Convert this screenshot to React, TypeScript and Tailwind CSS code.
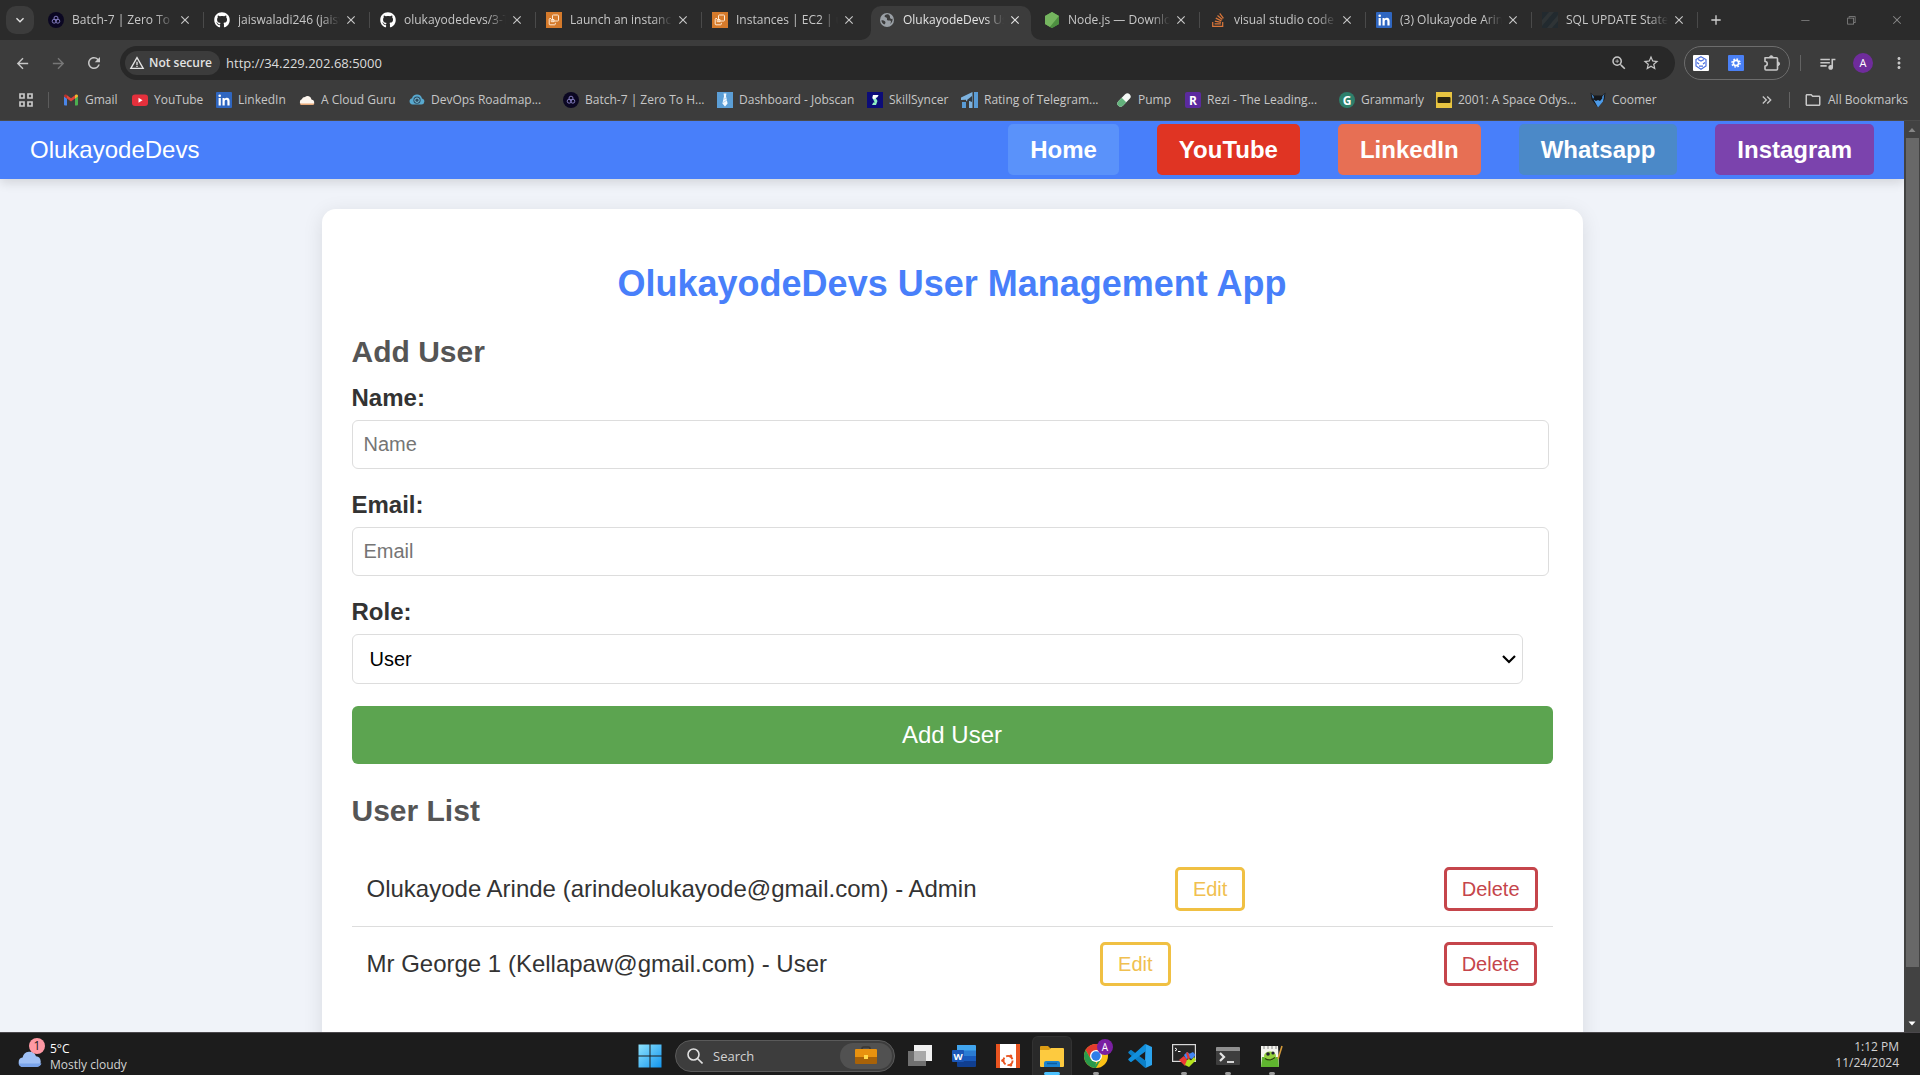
import type { ReactNode } from "react";
import {
  MdArrowBack,
  MdArrowForward,
  MdClose,
  MdKeyboardArrowDown,
  MdAdd,
  MdMoreVert,
  MdOutlineFolder,
  MdQueueMusic,
  MdRefresh,
  MdStarOutline,
  MdWarningAmber,
  MdZoomIn,
  MdKeyboardDoubleArrowRight,
} from "react-icons/md";
import { FaGithub, FaStackOverflow } from "react-icons/fa";
import { VscChromeClose, VscChromeMinimize, VscChromeRestore } from "react-icons/vsc";

/* ---------- Site icons ---------- */

const Batch = () => (
  <svg viewBox="0 0 16 16" className="size-4 shrink-0">
    <circle cx="8" cy="8" r="8" fill="#0b0722" />
    <g fill="none" stroke="#8c86c9" strokeWidth="0.9">
      <circle cx="8" cy="6.2" r="2" />
      <circle cx="6.2" cy="9.2" r="2" />
      <circle cx="9.8" cy="9.2" r="2" />
    </g>
  </svg>
);

const Github = () => <FaGithub className="size-4 shrink-0 text-white" />;

const Ec2 = () => (
  <svg viewBox="0 0 16 16" className="size-4 shrink-0">
    <rect width="16" height="16" fill="#d57a2b" />
    <g fill="none" stroke="#ffe9d2" strokeWidth="1">
      <rect x="6.5" y="3" width="6" height="6" rx="0.8" />
      <path d="M5 6.5H4a.8.8 0 0 0-.8.8V12a.8.8 0 0 0 .8.8h4.500a.8.8 0 0 0 .8-.8v-1.200" />
      <path d="M8 7.500v2.200H5.200V7.500Z" />
    </g>
  </svg>
);

const Globe = () => (
  <svg viewBox="0 0 16 16" className="size-4 shrink-0">
    <circle cx="8" cy="8" r="7" fill="#9aa0a6" />
    <path d="M9 2.200C7 2 5.200 3.200 5.600 4.600c.3 1 1.600.6 2.200 1.400.5.8-.3 1.600.6 2.200 1 .6 2.600-.2 3.400.8.5.8-.2 2-.9 3 2.200-1.200 3-3.300 2.600-5.200C11.800 7.200 10.800 6.300 11 5c.1-.9-.6-2.400-2-2.800ZM2.400 8.200c1.600.1 3.200.4 3.900 1.500.6 1.100-.2 2.200-1 2.900C3.600 11.700 2.500 10.200 2.400 8.200Z" fill="#3c3c3c" />
  </svg>
);

const Node = () => (
  <svg viewBox="0 0 16 16" className="size-4 shrink-0">
    <path d="M8 0l7 4v8l-7 4-7-4V4z" fill="#5fa04e" />
    <path d="M8 0l7 4-9 11-5-3V4z" fill="#75b55f" />
    <path d="M15 4v8l-7 4-2-1z" fill="#4e8f41" />
  </svg>
);

const Stack = () => <FaStackOverflow className="size-4 shrink-0 text-[#d9763a]" />;

const LinkedIn = () => (
  <svg viewBox="0 0 16 16" className="size-4 shrink-0">
    <rect width="16" height="16" rx="1" fill="#2f66c0" />
    <g fill="#fff">
      <circle cx="3.700" cy="3.700" r="1.300" />
      <path d="M2.600 6h2.200v7.500H2.600zM6.500 6h2.100v1c.5-.8 1.300-1.200 2.300-1.200 2 0 2.700 1.300 2.700 3.300v4.400h-2.200V9.500c0-1.100-.3-1.800-1.200-1.800-1 0-1.500.7-1.500 1.900v3.900H6.500z" />
    </g>
  </svg>
);

const Stripes = () => (
  <svg viewBox="0 0 16 16" className="size-4 shrink-0">
    <rect width="16" height="16" fill="#222a2f" />
    <path d="M0 8 7 0h5L0 14zM5 16 16 3v6l-6 7z" fill="#2f3436" />
  </svg>
);

const Gmail = () => (
  <svg viewBox="0 0 16 16" className="size-4 shrink-0">
    <path d="M1 4v8.500a1 1 0 0 0 1 1h2V6.500z" fill="#4a86e8" />
    <path d="M15 4v8.500a1 1 0 0 1-1 1h-2V6.500z" fill="#4caf50" />
    <path d="M4 6.600V3.200l4 3 4-3v3.400l-4 3z" fill="#e0453a" />
    <path d="M1 4c0-1.400 1.500-1.900 2.500-1.200l.5.400v3.500L1 4.600z" fill="#b8322a" />
    <path d="M15 4c0-1.400-1.500-1.900-2.500-1.200l-.5.400v3.500l3-2.100z" fill="#f2b92f" />
  </svg>
);

const YouTube = () => (
  <svg viewBox="0 0 16 16" className="size-4 shrink-0">
    <rect y="2.500" width="16" height="11.500" rx="3" fill="#e5303c" />
    <path d="M6.500 5.800v5l4-2.500z" fill="#fff" />
  </svg>
);

const Cloud = () => (
  <svg viewBox="0 0 16 16" className="size-4 shrink-0">
    <path d="M3 13a3 3 0 0 1-.2-5.700A3.400 3.400 0 0 1 6 5a4 4 0 0 1 6.500 2.500A2.800 2.800 0 0 1 13.200 13z" fill="#fdf6ee" />
    <path d="M.8 11.500c.4 1 1.200 1.500 2.200 1.500h10.200c1.200 0 2-.6 2.400-1.500z" fill="#e7a877" />
  </svg>
);

const DevOps = () => (
  <svg viewBox="0 0 16 16" className="size-4 shrink-0">
    <path d="M3.500 12.500A3.200 3.200 0 0 1 3 6.200 5.200 5.200 0 0 1 13 6.400a3.100 3.100 0 0 1-.5 6.100z" fill="#58a9cf" />
    <circle cx="8" cy="8.200" r="3.600" fill="#2b4a63" />
    <circle cx="8" cy="8.200" r="2.200" fill="none" stroke="#7fc6de" />
  </svg>
);

const Tie = () => (
  <svg viewBox="0 0 16 16" className="size-4 shrink-0">
    <rect width="16" height="16" fill="#5b9ed6" />
    <path d="M6.600 1.500h2.800L9 4.300l1.600 7.200L8 14.500l-2.600-3L7 4.300z" fill="#f3f9ff" />
    <path d="M6.600 7.500 9.300 5.800M6 10.500l4-2.300" stroke="#9cc5e8" strokeWidth=".7" />
  </svg>
);

const SkillSyncer = () => (
  <svg viewBox="0 0 16 16" className="size-4 shrink-0">
    <rect width="16" height="16" fill="#0c0c78" />
    <path d="M6 3h5.500L10 5.500H8.500L10.500 9 9 13H5l1.300-2.600h1.400L5.500 6z" fill="#8ff0c4" />
    <path d="M6 3h5.500L10 5.500H8.500L9 6.500 6 7 5.500 6z" fill="#fff" />
  </svg>
);

const Rating = () => (
  <svg viewBox="0 0 17 16" className="h-4 w-[17px] shrink-0">
    <path d="M0 5.500 11.500 0v16H8V7L5 9.500V7.800L0 8z" fill="#7db2de" />
    <path d="M1 10h4v6H1zM13 0h4v16h-4z" fill="#5a9cd6" />
    <path d="m6 8 5-4v6z" fill="#2f3b46" />
  </svg>
);

const Pill = () => (
  <svg viewBox="0 0 16 16" className="size-4 shrink-0">
    <g transform="rotate(45 8 8)">
      <rect x="4.800" y="0" width="6.400" height="16" rx="3.200" fill="#f4f8f5" />
      <path d="M4.800 8h6.400v4.800a3.200 3.200 0 0 1-6.400 0z" fill="#63b27c" />
    </g>
  </svg>
);

const Letter = ({ bg, children, round }: { bg: string; children: string; round?: boolean }) => (
  <svg viewBox="0 0 16 16" className="size-4 shrink-0">
    <rect width="16" height="16" rx={round ? 8 : 2} fill={bg} />
    <text x="8" y="12.500" textAnchor="middle" fontSize="12" fontWeight="700" fill="#fff" fontFamily="Open Sans, sans-serif">
      {children}
    </text>
  </svg>
);

const Imdb = () => (
  <svg viewBox="0 0 16 16" className="size-4 shrink-0">
    <rect width="16" height="16" fill="#e8c440" />
    <rect x="1.500" y="5" width="13" height="6" rx="1" fill="#2a2410" />
  </svg>
);

const Fox = () => (
  <svg viewBox="0 0 16 16" className="size-4 shrink-0">
    <path d="m.5.500 3 3h9l3-3-1 7L8 15.500 1.500 7.500z" fill="#15181d" />
    <path d="M3.500 7.500 6 9l2-1 2 1 4-4.500-1 5L8 15.500z" fill="#4d9be8" />
    <path d="M1.500 2 4 5l-1 2zM14.500 2 12 5l1 2z" fill="#4d9be8" />
    <path d="m5 5 3 1.500L11 5l-1 3-2-1-2 1z" fill="#15181d" />
  </svg>
);

/* ---------- Browser frame ---------- */

type Tab = { title: string; icon: ReactNode; active?: boolean; line?: boolean };

const tabs: Tab[] = [
  { title: "Batch-7 | Zero To H", icon: <Batch />, line: true },
  { title: "jaiswaladi246 (jaisw", icon: <Github />, line: true },
  { title: "olukayodedevs/3-T", icon: <Github />, line: true },
  { title: "Launch an instance", icon: <Ec2 />, line: true },
  { title: "Instances | EC2 | us", icon: <Ec2 /> },
  { title: "OlukayodeDevs Us", icon: <Globe />, active: true },
  { title: "Node.js — Downlo", icon: <Node />, line: true },
  { title: "visual studio code", icon: <Stack />, line: true },
  { title: "(3) Olukayode Arin", icon: <LinkedIn />, line: true },
  { title: "SQL UPDATE State", icon: <Stripes />, line: true },
];

function BrowserTab({ title, icon, active, line }: Tab) {
  return (
    <div className={`relative h-[34px] w-[166px] min-w-0 ${active ? "px-[3px]" : ""}`}>
      <div
        className={`relative flex h-full items-center gap-2 pb-[6px] ${
          active ? "rounded-t-[10px] bg-[#3c3c3c] pr-[9px] pl-2 text-[#e3e3e3]" : "pr-3 pl-[10px] text-[#c7c7c7]"
        }`}
      >
        {active && (
          <>
            <svg viewBox="0 0 10 10" className="absolute bottom-0 -left-[10px] size-[10px]">
              <path d="M10 0v10H0A10 10 0 0 0 10 0z" fill="#3c3c3c" />
            </svg>
            <svg viewBox="0 0 10 10" className="absolute -right-[10px] bottom-0 size-[10px]">
              <path d="M0 0v10h10A10 10 0 0 1 0 0z" fill="#3c3c3c" />
            </svg>
          </>
        )}
        {icon}
        <span className="-mr-1 min-w-0 flex-1 overflow-hidden [mask-image:linear-gradient(to_right,black_82%,transparent)] text-xs whitespace-nowrap">
          {title}
        </span>
        <button aria-label={`Close ${title}`} className="shrink-0">
          <MdClose className="size-[14px]" />
        </button>
      </div>
      {line && <span className="absolute top-[6px] right-0 h-4 w-px bg-[#4a4a4a]" />}
    </div>
  );
}

function TabStrip() {
  return (
    <div className="flex h-10 shrink-0 items-end bg-[#2b2b2b] pl-[6px]">
      <button aria-label="Search tabs" className="mr-1 mb-[6px] flex size-7 shrink-0 items-center justify-center rounded-[10px] bg-[#3c3c3c] text-[#e3e3e3]">
        <MdKeyboardArrowDown className="size-4" />
      </button>
      {tabs.map((t) => (
        <BrowserTab key={t.title} {...t} />
      ))}
      <button aria-label="New tab" className="ml-[6px] flex h-10 w-6 items-center justify-center text-[#d0d0d0]">
        <MdAdd className="size-4" />
      </button>
      <div className="ml-auto flex h-10 text-[#8a8a8a]">
        <button aria-label="Minimize" className="flex w-[46px] items-center justify-center">
          <VscChromeMinimize className="size-3" />
        </button>
        <button aria-label="Restore" className="flex w-[46px] items-center justify-center">
          <VscChromeRestore className="size-3" />
        </button>
        <button aria-label="Close" className="flex w-[46px] items-center justify-center">
          <VscChromeClose className="size-3" />
        </button>
      </div>
    </div>
  );
}

function Toolbar() {
  return (
    <div className="flex h-[46px] shrink-0 items-center bg-[#3c3c3c] text-[#c7c7c7]">
      <div className="flex w-[120px] shrink-0 items-center pl-1">
        <button aria-label="Back" className="flex w-9 justify-center">
          <MdArrowBack className="size-[17px]" />
        </button>
        <button aria-label="Forward" className="flex w-9 justify-center text-[#777]">
          <MdArrowForward className="size-[17px]" />
        </button>
        <button aria-label="Reload" className="flex w-9 justify-center">
          <MdRefresh className="size-[18px]" />
        </button>
      </div>
      <div className="flex h-[34px] flex-1 items-center rounded-full bg-[#282828] px-[5px]">
        <button className="flex h-6 items-center gap-1 rounded-full bg-[#3c3c3c] pr-2 pl-1 text-xs font-semibold text-[#e3e3e3]">
          <MdWarningAmber className="size-4" />
          Not secure
        </button>
        <input
          aria-label="Address"
          defaultValue="http://34.229.202.68:5000"
          className="ml-[6px] h-6 flex-1 bg-transparent text-[13px] text-[#dcdcdc] outline-none"
        />
        <button aria-label="Zoom" className="mr-[14px]">
          <MdZoomIn className="size-[18px]" />
        </button>
        <button aria-label="Bookmark this page" className="mr-[10px]">
          <MdStarOutline className="size-[18px]" />
        </button>
      </div>
      <div className="ml-[9px] flex h-[34px] w-[106px] items-center justify-between rounded-full border border-[#6d6d6d] px-2">
        <button aria-label="Monica extension">
          <svg viewBox="0 0 16 16" className="size-4">
            <rect width="16" height="16" rx="1" fill="#fff" />
            <g fill="none" stroke="#4a6ee0" strokeWidth="1.200">
              <path d="M8 1.800 13 4.500v6.500L8 14.200 3 11V4.500z" />
              <path d="M5 4.500 8 6l3-1.500M4 7.500 6 9M12 7.500 10 9M6 11.200h4" />
            </g>
          </svg>
        </button>
        <button aria-label="Settings extension">
          <svg viewBox="0 0 16 16" className="size-4">
            <rect width="16" height="16" rx="1" fill="#4a80f5" />
            <circle cx="8" cy="8" r="2.600" fill="none" stroke="#fff" strokeWidth="1.600" />
            <circle cx="8" cy="8" r="4" fill="none" stroke="#fff" strokeWidth="1.500" strokeDasharray="1.570 1.570" />
          </svg>
        </button>
        <button aria-label="Extensions">
          <svg viewBox="0 0 18 18" className="size-[18px]" fill="none" stroke="#c7c7c7" strokeWidth="1.600">
            <path d="M2 3.800h11.500a1 1 0 0 1 1 1V15a1 1 0 0 1-1 1H3a1 1 0 0 1-1-1v-3c3 0 3-4.500 0-4.500z" strokeLinejoin="round" />
            <path d="M6.500 3.500a1.800 1.800 0 0 1 3.600 0zM14.800 8a1.800 1.800 0 0 1 0 3.600z" fill="#c7c7c7" strokeWidth="1" />
          </svg>
        </button>
      </div>
      <span className="ml-[10px] h-4 w-px bg-[#636363]" />
      <div className="flex w-[119px] items-center pl-2">
        <button aria-label="Media" className="flex w-9 justify-center">
          <MdQueueMusic className="size-[19px]" />
        </button>
        <button aria-label="Profile" className="flex w-9 justify-center">
          <span className="flex size-5 items-center justify-center rounded-full bg-[#6f2c9c] text-[11px] text-white">A</span>
        </button>
        <button aria-label="Menu" className="flex w-9 justify-center">
          <MdMoreVert className="size-[18px]" />
        </button>
      </div>
    </div>
  );
}

const bookmarks: { label: string; icon: ReactNode; width: string }[] = [
  { label: "Gmail", icon: <Gmail />, width: "w-[69px]" },
  { label: "YouTube", icon: <YouTube />, width: "w-[84px]" },
  { label: "LinkedIn", icon: <LinkedIn />, width: "w-[83px]" },
  { label: "A Cloud Guru", icon: <Cloud />, width: "w-[110px]" },
  { label: "DevOps Roadmap...", icon: <DevOps />, width: "w-[154px]" },
  { label: "Batch-7 | Zero To H...", icon: <Batch />, width: "w-[154px]" },
  { label: "Dashboard - Jobscan", icon: <Tie />, width: "w-[150px]" },
  { label: "SkillSyncer", icon: <SkillSyncer />, width: "w-[94px]" },
  { label: "Rating of Telegram...", icon: <Rating />, width: "w-[155px]" },
  { label: "Pump", icon: <Pill />, width: "w-[69px]" },
  { label: "Rezi - The Leading...", icon: <Letter bg="#5b2a9e">R</Letter>, width: "w-[154px]" },
  { label: "Grammarly", icon: <Letter bg="#2e7f6b" round>G</Letter>, width: "w-[97px]" },
  { label: "2001: A Space Odys...", icon: <Imdb />, width: "w-[154px]" },
  { label: "Coomer", icon: <Fox />, width: "w-[80px]" },
];

function BookmarksBar() {
  return (
    <nav aria-label="Bookmarks" className="flex h-[35px] shrink-0 items-center border-b border-[#4b4b4b] bg-[#3c3c3c] pr-3 pb-[6px] text-xs text-[#c7c7c7]">
      <button aria-label="Apps" className="ml-[19px]">
        <svg viewBox="0 0 14 14" className="size-[14px]" fill="none" stroke="#c7c7c7" strokeWidth="1.700">
          <path d="M1 1h4v4H1zM9 1h4v4H9zM1 9h4v4H1zM9 9h4v4H9z" />
        </svg>
      </button>
      <span className="mr-[14px] ml-[15px] h-4 w-px bg-[#5c5c5c]" />
      {bookmarks.map((b) => (
        <a key={b.label} href="#" className={`flex shrink-0 items-center gap-[6px] whitespace-nowrap ${b.width}`}>
          {b.icon}
          {b.label}
        </a>
      ))}
      <button aria-label="More bookmarks" className="ml-auto">
        <MdKeyboardDoubleArrowRight className="size-4" />
      </button>
      <span className="mx-[14px] h-4 w-px bg-[#636363]" />
      <a href="#" className="flex items-center gap-[6px]">
        <MdOutlineFolder className="size-[18px]" />
        All Bookmarks
      </a>
    </nav>
  );
}

/* ---------- User management page ---------- */

const links = [
  { label: "Home", bg: "bg-[#5a92fa]" },
  { label: "YouTube", bg: "bg-[#e03423]" },
  { label: "LinkedIn", bg: "bg-[#e76f54]" },
  { label: "Whatsapp", bg: "bg-[#4b89c8]" },
  { label: "Instagram", bg: "bg-[#7b43ad]" },
];

const users = [
  { name: "Olukayode Arinde", email: "arindeolukayode@gmail.com", role: "Admin" },
  { name: "Mr George 1", email: "Kellapaw@gmail.com", role: "User" },
];

function Field({ id, label }: { id: string; label: string }) {
  return (
    <div className="mb-5">
      <label htmlFor={id} className="mb-[6px] block text-2xl font-bold">
        {label}:
      </label>
      <input
        id={id}
        placeholder={label}
        className="h-[49px] w-[calc(100%-4px)] rounded-md border border-[#ddd] bg-white px-[11px] text-xl placeholder:text-[#757575]"
      />
    </div>
  );
}

function SiteHeader() {
  return (
    <header className="relative flex h-[58px] shrink-0 items-center justify-between bg-[#487ffa] px-[30px] pb-px text-2xl text-white shadow-[0_4px_10px_rgba(0,0,0,0.12)]">
      <span>OlukayodeDevs</span>
      <nav className="flex gap-[38px]">
        {links.map((l) => (
          <a key={l.label} href="#" className={`rounded-[5px] px-[22px] py-[9px] leading-[33px] font-bold ${l.bg}`}>
            {l.label}
          </a>
        ))}
      </nav>
    </header>
  );
}

function UserPage() {
  return (
    <div className="flex min-h-0 min-w-0 flex-1 flex-col overflow-hidden bg-[#f0f3f9] font-['Liberation_Sans',Arial,sans-serif] text-[#333]">
      <SiteHeader />
      <main className="mx-auto mt-[30px] w-full max-w-[1261px] shrink-0 rounded-[14px] bg-white px-[30px] pt-[51px] pb-24 shadow-[0_4px_20px_rgba(0,0,0,0.1)]">
        <h1 className="text-center text-4xl leading-[48px] font-bold text-[#487ffa]">OlukayodeDevs User Management App</h1>
        <h2 className="mt-[26px] mb-3 text-3xl leading-[36px] font-bold text-[#555]">Add User</h2>
        <form onSubmit={(e) => e.preventDefault()}>
          <Field id="name" label="Name" />
          <Field id="email" label="Email" />
          <label htmlFor="role" className="mb-[6px] block text-2xl font-bold">
            Role:
          </label>
          <div className="relative mb-[22px] w-[calc(100%-30px)]">
            <select id="role" className="block h-[50px] w-full appearance-none rounded-md border border-[#ddd] bg-white px-[17px] text-xl text-black">
              <option>User</option>
              <option>Admin</option>
            </select>
            <svg viewBox="0 0 14 9" className="pointer-events-none absolute top-[21px] right-[7px] h-[9px] w-[14px]" fill="none" stroke="#000" strokeWidth="2.200">
              <path d="m1 1 6 6 6-6" />
            </svg>
          </div>
          <button className="block h-[58px] w-full rounded-md bg-[#5ca450] text-2xl text-white">Add User</button>
        </form>
        <h2 className="mt-[29px] mb-[23px] text-3xl leading-[36px] font-bold text-[#555]">User List</h2>
        <ul>
          {users.map((u) => (
            <li key={u.email} className="flex items-center justify-between border-b border-[#ddd] p-[15px] text-2xl last:border-b-0">
              <span>
                {u.name} ({u.email}) - {u.role}
              </span>
              <button className="rounded-[5px] border-3 border-[#f0c043] px-[15px] py-[7px] text-xl leading-6 text-[#f0c050]">Edit</button>
              <button className="rounded-[5px] border-3 border-[#c5454b] px-[15px] py-[7px] text-xl leading-6 text-[#c5454b]">Delete</button>
            </li>
          ))}
        </ul>
      </main>
    </div>
  );
}

function ScrollBar() {
  return (
    <div className="flex w-4 shrink-0 flex-col items-center bg-[#424242]">
      <svg viewBox="0 0 16 17" className="h-[17px] w-4">
        <path d="M8 7l3.500 4h-7z" fill="#868686" />
      </svg>
      <div className="w-[13px] flex-1 bg-[#686868]" />
      <svg viewBox="0 0 16 17" className="mt-12 h-[17px] w-4">
        <path d="M8 10.500 4.500 6.500h7z" fill="#fff" />
      </svg>
    </div>
  );
}

/* ---------- Desktop taskbar ---------- */

const Windows = () => (
  <svg viewBox="0 0 24 24" className="size-6">
    <defs>
      <linearGradient id="win" x1="0" y1="0" x2="1" y2="1">
        <stop offset="0" stopColor="#8fe3fd" />
        <stop offset="1" stopColor="#1295ee" />
      </linearGradient>
    </defs>
    <path d="M.5.500h11v11H.5zM12.500.500h11v11h-11zM.5 12.500h11v11H.5zM12.500 12.500h11v11h-11z" fill="url(#win)" />
  </svg>
);

const Briefcase = () => (
  <svg viewBox="0 0 22 20" className="h-5 w-[22px]">
    <path d="M7 4V2.500C7 1.700 7.500 1 8.500 1h5c1 0 1.500.700 1.500 1.500V4" fill="none" stroke="#3a3632" strokeWidth="1.600" />
    <rect y="3" width="22" height="9" rx="1" fill="#e8920f" />
    <path d="M0 11h22v6a1 1 0 0 1-1 1H1a1 1 0 0 1-1-1z" fill="#a86208" />
    <rect x="9" y="9" width="4" height="4" fill="#ffd84a" />
  </svg>
);

const TaskView = () => (
  <svg viewBox="0 0 24 24" className="size-6">
    <rect x="6" y="1" width="18" height="16" fill="#f0f0f0" />
    <rect x="0" y="7" width="18" height="15" fill="#707070" />
    <path d="M6 7h12v10H6z" fill="#a9a9a9" />
  </svg>
);

const Word = () => (
  <svg viewBox="0 0 24 24" className="size-6">
    <path d="M5 1h18a1 1 0 0 1 1 1v5H5z" fill="#41a5ee" />
    <path d="M5 6.500h19v6H5z" fill="#2b7cd3" />
    <path d="M5 12h19v5.500H5z" fill="#185abd" />
    <path d="M5 17h19v5a1 1 0 0 1-1 1H6a1 1 0 0 1-1-1z" fill="#103f91" />
    <rect y="6" width="12" height="12" rx="1" fill="#1b57b8" />
    <text x="6" y="15.500" textAnchor="middle" fontSize="9.500" fontWeight="700" fill="#fff" fontFamily="Open Sans, sans-serif">W</text>
  </svg>
);

const Ubuntu = () => (
  <svg viewBox="0 0 24 24" className="size-6">
    <rect width="24" height="24" fill="#e95420" />
    <rect x="4" width="16" height="24" fill="#fff" />
    <circle cx="12" cy="16.500" r="4.600" fill="none" stroke="#e95420" strokeWidth="1.900" strokeDasharray="7.600 2" />
    <circle cx="6.700" cy="16.500" r="1.500" fill="#e95420" />
    <circle cx="14.800" cy="12" r="1.500" fill="#e95420" />
    <circle cx="14.800" cy="21" r="1.500" fill="#e95420" />
  </svg>
);

const Explorer = () => (
  <svg viewBox="0 0 24 24" className="size-6">
    <path d="M0 3a1 1 0 0 1 1-1h7l2.500 2.500V8H0z" fill="#dd9c14" />
    <path d="M0 6h9l2-2h12a1 1 0 0 1 1 1v17a1 1 0 0 1-1 1H1a1 1 0 0 1-1-1z" fill="#fdca3f" />
    <path d="M4 23v-4a2 2 0 0 1 2-2h12a2 2 0 0 1 2 2v4z" fill="#1b83cf" />
    <path d="M7 19.500h10" stroke="#0f5c9c" strokeWidth="1.500" />
  </svg>
);

const Chrome = () => (
  <svg viewBox="0 0 24 24" className="size-6">
    <circle cx="12" cy="12" r="12" fill="#fbc116" />
    <path d="M12 12 6.800 15 1.600 6A12 12 0 0 1 22.400 6H12z" fill="#e33b2e" />
    <path d="M1.600 6 6.800 15 12 18l-.5 6A12 12 0 0 1 1.600 6z" fill="#299a4c" />
    <path d="M17.200 15 12 24a12 12 0 0 1-2-.2L14 17z" fill="#299a4c" />
    <circle cx="12" cy="12" r="6" fill="#fff" />
    <circle cx="12" cy="12" r="4.700" fill="#2f7de9" />
  </svg>
);

const VsCode = () => (
  <svg viewBox="0 0 24 24" className="size-6">
    <path d="M17.500 0 24 3v18l-6.500 3L17 19z" fill="#2ba4ee" />
    <path d="M.6 7.800 2.300 6.300c.4-.4.900-.4 1.300-.1L18 17v6.500c-.6.3-1.200.200-1.700-.3L.6 9.200a1 1 0 0 1 0-1.400z" fill="#0b7fc7" />
    <path d="M.6 16.200 2.300 17.700c.4.400.9.400 1.300.1L18 7V.5C17.400.2 16.800.300 16.300.8L.6 14.800a1 1 0 0 0 0 1.400z" fill="#118fdc" />
  </svg>
);

const MobaXterm = () => (
  <svg viewBox="0 0 24 24" className="size-6">
    <rect x=".6" y=".6" width="22.800" height="16.800" fill="#262626" stroke="#d8d8d8" strokeWidth="1.200" />
    <path d="m3 4 2 1.500L3 7M6 7.500h2.500" stroke="#fff" fill="none" />
    <path d="m12 11 3-3 3 2-1 4-3 1z" fill="#4286f5" />
    <path d="m17 10 4-2 2.500 3-3.500 4-3-1z" fill="#4286f5" />
    <path d="m7 16 5-4 4 5-3 5z" fill="#ee3a36" />
    <path d="m14 9 2-1 2 6-2 2z" fill="#e23b30" />
    <path d="m15 16 2-1 2 1.500L22 13l2 3-7 7-4-2z" fill="#b5e31d" />
  </svg>
);

const Terminal = () => (
  <svg viewBox="0 0 24 24" className="size-6">
    <rect y="3" width="24" height="18" rx="1" fill="#3e3e3e" />
    <path d="M0 7V4a1 1 0 0 1 1-1h22a1 1 0 0 1 1 1v3z" fill="#8f8f8f" />
    <path d="m4 9 4 4-4 4" fill="none" stroke="#e6e6e6" strokeWidth="2.200" />
    <path d="M11 18h7" stroke="#e6e6e6" strokeWidth="1.800" />
  </svg>
);

const Notepad = () => (
  <svg viewBox="0 0 24 24" className="size-6">
    <path d="M1 2h17l1 21H1z" fill="#f4f4ee" />
    <path d="M2 13h16l1 10H1z" fill="#5fb52f" />
    <path d="M4 2v3M8 2v3M12 2v3M16 2v3" stroke="#888" />
    <ellipse cx="10" cy="12" rx="6" ry="4.500" fill="#93cf3d" />
    <circle cx="8" cy="10" r="1.800" fill="#223" />
    <circle cx="13" cy="9" r="1.600" fill="#223" />
    <path d="M5 14.500c3 2 7 1.500 10-1" stroke="#27420f" fill="none" strokeWidth="1.200" />
    <path d="M22 2 18 15" stroke="#d59a3a" strokeWidth="1.600" />
  </svg>
);

const apps: { name: string; icon: ReactNode; mark?: "dot" | "bar" }[] = [
  { name: "Task view", icon: <TaskView /> },
  { name: "Word", icon: <Word /> },
  { name: "Ubuntu", icon: <Ubuntu /> },
  { name: "File Explorer", icon: <Explorer />, mark: "bar" },
  { name: "Chrome", icon: <Chrome />, mark: "dot" },
  { name: "Visual Studio Code", icon: <VsCode /> },
  { name: "MobaXterm", icon: <MobaXterm />, mark: "dot" },
  { name: "Terminal", icon: <Terminal />, mark: "dot" },
  { name: "Notepad++", icon: <Notepad />, mark: "dot" },
];

function Taskbar() {
  return (
    <footer className="grid h-[43px] shrink-0 grid-cols-[1fr_auto_1fr] border-t border-[#4a474b] bg-[#1c1c1c] text-xs leading-4 text-[#d2d2d2]">
      <button className="flex items-start gap-2 pt-[7px] pl-[18px] text-left">
        <span className="relative block h-7 w-6">
          <svg viewBox="0 0 24 16" className="mt-[11px] h-4 w-6">
            <path d="M5 16a4.800 4.800 0 0 1-.4-9.500A7 7 0 0 1 18 5.200 5.500 5.500 0 0 1 18.500 16z" fill="#9fc0f5" />
            <path d="M.5 12.500A4.800 4.800 0 0 0 5 16h13.500a5.400 5.400 0 0 0 5-3.500z" fill="#7aa4ea" />
          </svg>
          <span className="absolute -top-[2px] left-[11px] flex size-4 items-center justify-center rounded-full bg-[#ff99a4] text-xs text-[#222]">1</span>
        </span>
        <span className="pt-px">
          <span className="block text-white">5°C</span>
          <span className="block">Mostly cloudy</span>
        </span>
      </button>
      <div className="flex pl-[2px]">
        <button aria-label="Start" className="flex w-11 items-center justify-center pt-1">
          <Windows />
        </button>
        <button className="mt-[7px] mr-[3px] ml-[3px] flex h-8 w-[220px] items-center rounded-full border border-[#5a5a5a] bg-[#3d3d3d] pr-[2px] pl-[11px] text-[13px]">
          <svg viewBox="0 0 16 16" className="mr-[10px] size-4" fill="none" stroke="#e0e0e0" strokeWidth="1.600">
            <circle cx="6.500" cy="6.500" r="5.500" />
            <path d="m10.500 10.500 5 5" />
          </svg>
          Search
          <span className="ml-auto flex h-[26px] w-[52px] items-center justify-center rounded-full bg-[#515151]">
            <Briefcase />
          </span>
        </button>
        {apps.map((a) => (
          <button key={a.name} aria-label={a.name} className="relative flex w-11 items-center justify-center pt-1">
            {a.mark === "bar" && <span className="absolute inset-x-[2px] top-[3px] bottom-0 rounded-t-md border border-b-0 border-[#323232] bg-[#292929]" />}
            <span className="relative">{a.icon}</span>
            {a.name === "Chrome" && (
              <span className="absolute top-[6px] left-[23px] flex size-4 items-center justify-center rounded-full bg-[#7a1fa2] text-[10px] text-white">A</span>
            )}
            {a.mark === "bar" && <span className="absolute bottom-0 h-[3px] w-4 rounded-full bg-[#4cc2ff]" />}
            {a.mark === "dot" && <span className="absolute bottom-0 h-[3px] w-[6px] rounded-full bg-[#9a9a9a]" />}
          </button>
        ))}
      </div>
      <button className="justify-self-end pt-[2px] pr-[21px] text-right">
        <span className="block">1:12 PM</span>
        <span className="block">11/24/2024</span>
      </button>
    </footer>
  );
}

export default function App() {
  return (
    <div className="flex h-screen flex-col overflow-hidden font-['Open_Sans','Noto_Sans',sans-serif]">
      <TabStrip />
      <Toolbar />
      <BookmarksBar />
      <div className="flex min-h-0 flex-1">
        <UserPage />
        <ScrollBar />
      </div>
      <Taskbar />
    </div>
  );
}
